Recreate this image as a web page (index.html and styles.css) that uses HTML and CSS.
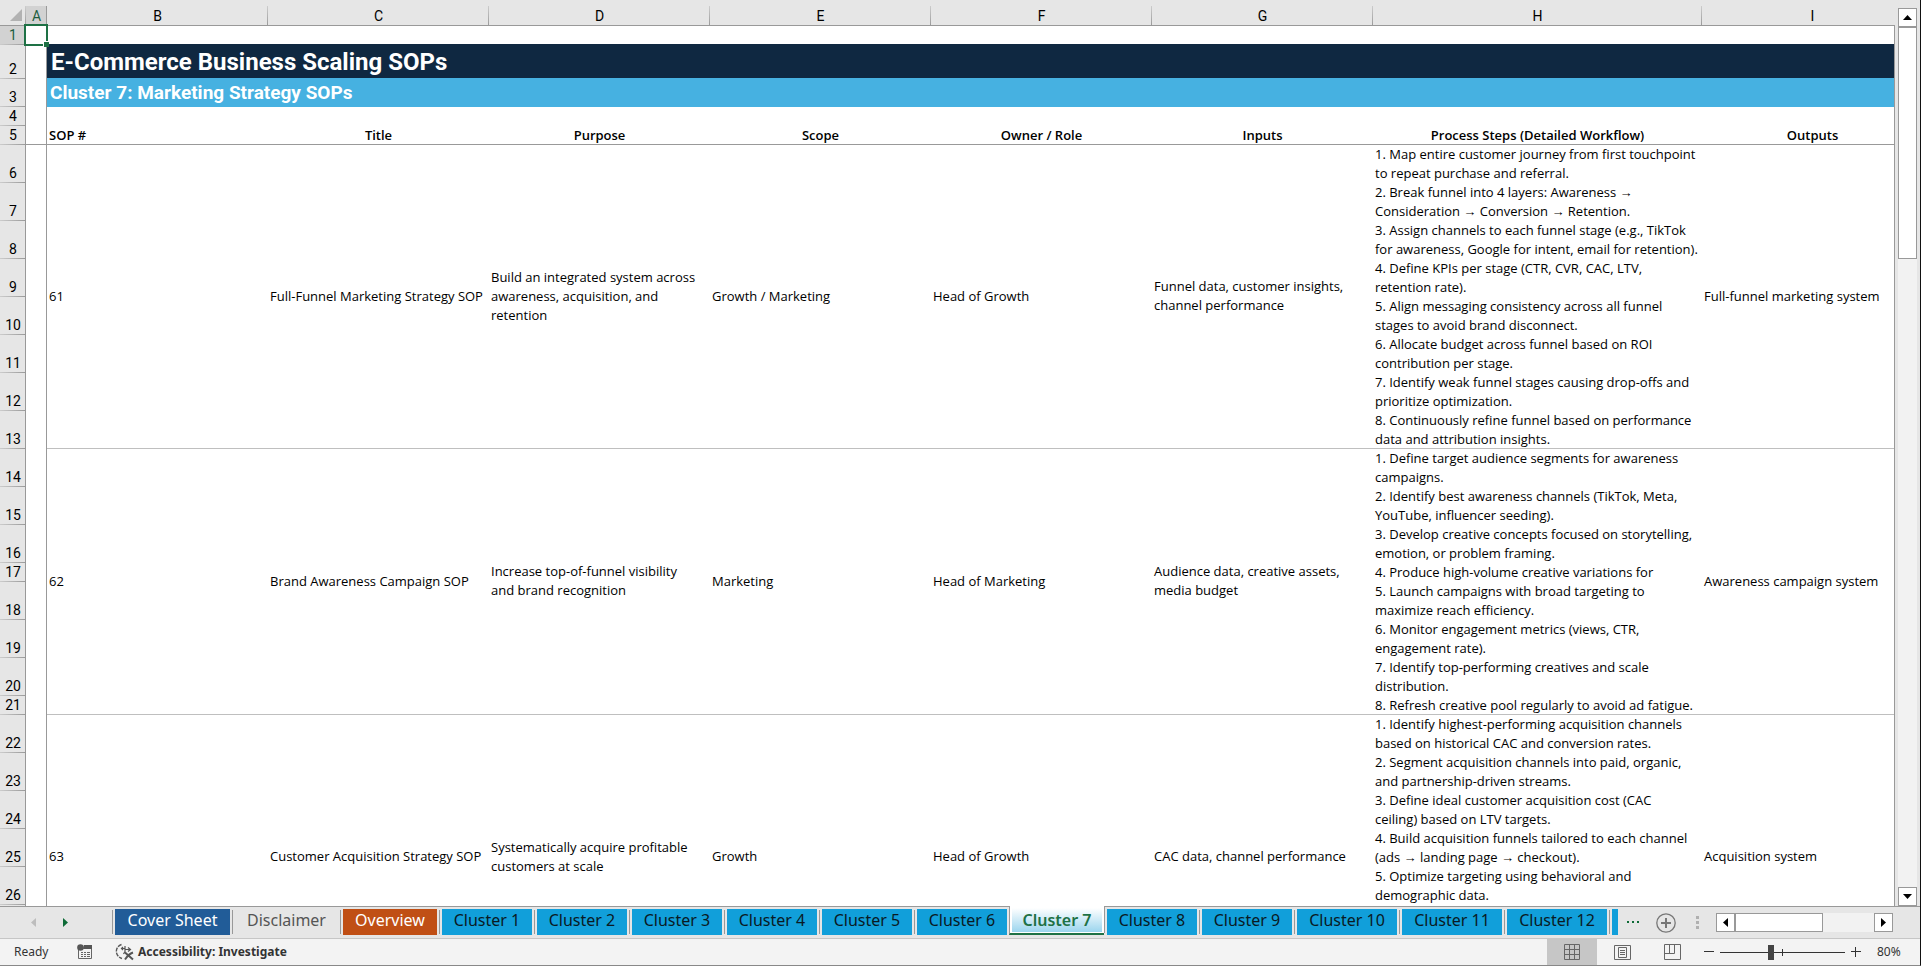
FILE: index.html
```html
<!DOCTYPE html>
<html lang="en">
<head>
<meta charset="utf-8">
<title>E-Commerce Business Scaling SOPs</title>
<link rel="stylesheet" href="styles.css">
</head>
<body>
<main class="workspace">
  <div class="viewport">
    <table class="sheet">
      <colgroup>
        <col class="col-head"><col class="col-a"><col class="col-std"><col class="col-std"><col class="col-std"><col class="col-std"><col class="col-std"><col class="col-std"><col class="col-steps"><col class="col-std">
      </colgroup>
      <thead>
        <tr>
          <th class="corner"><svg width="12" height="12" viewBox="0 0 12 12" aria-hidden="true"><path d="M12 0v12H0z" fill="#b2b2b2"/></svg></th>
          <th class="active">A</th><th>B</th><th>C</th><th>D</th><th>E</th><th>F</th><th>G</th><th>H</th><th>I</th>
        </tr>
      </thead>
      <tbody>
        <tr class="r-short"><th class="active">1</th><td class="a selected"></td><td colspan="8"></td></tr>
        <tr class="r-title"><th>2</th><td class="a"></td><td class="title" colspan="8">E-Commerce Business Scaling SOPs</td></tr>
        <tr class="r-subtitle"><th>3</th><td class="a"></td><td class="subtitle" colspan="8">Cluster 7: Marketing Strategy SOPs</td></tr>
        <tr class="r-short"><th>4</th><td class="a"></td><td colspan="8"></td></tr>
        <tr class="r-short labels"><th>5</th><td class="a"></td><td class="first">SOP #</td><td>Title</td><td>Purpose</td><td>Scope</td><td>Owner / Role</td><td>Inputs</td><td>Process Steps (Detailed Workflow)</td><td>Outputs</td></tr>

        <tr class="r-tall"><th>6</th><td class="a"></td>
          <td class="rec" rowspan="8">61</td>
          <td class="rec" rowspan="8">Full-Funnel Marketing Strategy SOP</td>
          <td class="rec" rowspan="8">Build an integrated system across<br>awareness, acquisition, and<br>retention</td>
          <td class="rec" rowspan="8">Growth / Marketing</td>
          <td class="rec" rowspan="8">Head of Growth</td>
          <td class="rec" rowspan="8">Funnel data, customer insights,<br>channel performance</td>
          <td class="rec steps" rowspan="8">1. Map entire customer journey from first touchpoint<br>to repeat purchase and referral.<br>2. Break funnel into 4 layers: Awareness →<br>Consideration → Conversion → Retention.<br>3. Assign channels to each funnel stage (e.g., TikTok<br>for awareness, Google for intent, email for retention).<br>4. Define KPIs per stage (CTR, CVR, CAC, LTV,<br>retention rate).<br>5. Align messaging consistency across all funnel<br>stages to avoid brand disconnect.<br>6. Allocate budget across funnel based on ROI<br>contribution per stage.<br>7. Identify weak funnel stages causing drop-offs and<br>prioritize optimization.<br>8. Continuously refine funnel based on performance<br>data and attribution insights.</td>
          <td class="rec" rowspan="8">Full-funnel marketing system</td></tr>
        <tr class="r-tall"><th>7</th><td class="a"></td></tr>
        <tr class="r-tall"><th>8</th><td class="a"></td></tr>
        <tr class="r-tall"><th>9</th><td class="a"></td></tr>
        <tr class="r-tall"><th>10</th><td class="a"></td></tr>
        <tr class="r-tall"><th>11</th><td class="a"></td></tr>
        <tr class="r-tall"><th>12</th><td class="a"></td></tr>
        <tr class="r-tall"><th>13</th><td class="a"></td></tr>

        <tr class="r-tall"><th>14</th><td class="a"></td>
          <td class="rec" rowspan="8">62</td>
          <td class="rec" rowspan="8">Brand Awareness Campaign SOP</td>
          <td class="rec" rowspan="8">Increase top-of-funnel visibility<br>and brand recognition</td>
          <td class="rec" rowspan="8">Marketing</td>
          <td class="rec" rowspan="8">Head of Marketing</td>
          <td class="rec" rowspan="8">Audience data, creative assets,<br>media budget</td>
          <td class="rec steps" rowspan="8">1. Define target audience segments for awareness<br>campaigns.<br>2. Identify best awareness channels (TikTok, Meta,<br>YouTube, influencer seeding).<br>3. Develop creative concepts focused on storytelling,<br>emotion, or problem framing.<br>4. Produce high-volume creative variations for<br>5. Launch campaigns with broad targeting to<br>maximize reach efficiency.<br>6. Monitor engagement metrics (views, CTR,<br>engagement rate).<br>7. Identify top-performing creatives and scale<br>distribution.<br>8. Refresh creative pool regularly to avoid ad fatigue.</td>
          <td class="rec" rowspan="8">Awareness campaign system</td></tr>
        <tr class="r-tall"><th>15</th><td class="a"></td></tr>
        <tr class="r-tall"><th>16</th><td class="a"></td></tr>
        <tr class="r-short"><th>17</th><td class="a"></td></tr>
        <tr class="r-tall"><th>18</th><td class="a"></td></tr>
        <tr class="r-tall"><th>19</th><td class="a"></td></tr>
        <tr class="r-tall"><th>20</th><td class="a"></td></tr>
        <tr class="r-short"><th>21</th><td class="a"></td></tr>

        <tr class="r-tall"><th>22</th><td class="a"></td>
          <td class="rec" rowspan="8">63</td>
          <td class="rec" rowspan="8">Customer Acquisition Strategy SOP</td>
          <td class="rec" rowspan="8">Systematically acquire profitable<br>customers at scale</td>
          <td class="rec" rowspan="8">Growth</td>
          <td class="rec" rowspan="8">Head of Growth</td>
          <td class="rec" rowspan="8">CAC data, channel performance</td>
          <td class="rec steps" rowspan="8">1. Identify highest-performing acquisition channels<br>based on historical CAC and conversion rates.<br>2. Segment acquisition channels into paid, organic,<br>and partnership-driven streams.<br>3. Define ideal customer acquisition cost (CAC<br>ceiling) based on LTV targets.<br>4. Build acquisition funnels tailored to each channel<br>(ads → landing page → checkout).<br>5. Optimize targeting using behavioral and<br>demographic data.</td>
          <td class="rec" rowspan="8">Acquisition system</td></tr>
        <tr class="r-tall"><th>23</th><td class="a"></td></tr>
        <tr class="r-tall"><th>24</th><td class="a"></td></tr>
        <tr class="r-tall"><th>25</th><td class="a"></td></tr>
        <tr class="r-tall"><th>26</th><td class="a"></td></tr>
        <tr class="r-tall"><th></th><td class="a"></td></tr>
        <tr class="r-tall"><th></th><td class="a"></td></tr>
        <tr class="r-short"><th></th><td class="a"></td></tr>
      </tbody>
    </table>
  </div>
  <div class="vscroll">
    <button class="scroll-btn" aria-label="Scroll up"><svg width="9" height="5" viewBox="0 0 9 5"><path d="M4.500 0L9 5H0z"/></svg></button>
    <div class="vtrack"><div class="vthumb"></div></div>
    <button class="scroll-btn" aria-label="Scroll down"><svg width="9" height="5" viewBox="0 0 9 5"><path d="M0 0h9L4.500 5z"/></svg></button>
  </div>
</main>

<nav class="tabbar" aria-label="Sheets">
  <div class="tab-nav">
    <button aria-label="Previous sheet"><svg width="5" height="9" viewBox="0 0 5 9"><path d="M5 0v9L0 4.500z" fill="#bdbdbd"/></svg></button>
    <button aria-label="Next sheet"><svg width="5" height="9" viewBox="0 0 5 9"><path d="M0 0v9l5-4.500z" fill="#0e6b37"/></svg></button>
  </div>
  <ul class="tabs">
    <li><button class="tab cover">Cover Sheet</button></li>
    <li><button class="tab plain">Disclaimer</button></li>
    <li><button class="tab overview">Overview</button></li>
    <li><button class="tab">Cluster 1</button></li>
    <li><button class="tab">Cluster 2</button></li>
    <li><button class="tab">Cluster 3</button></li>
    <li><button class="tab">Cluster 4</button></li>
    <li><button class="tab">Cluster 5</button></li>
    <li><button class="tab">Cluster 6</button></li>
    <li class="current"><button class="tab" aria-current="true">Cluster 7</button></li>
    <li class="after-current"><button class="tab">Cluster 8</button></li>
    <li><button class="tab">Cluster 9</button></li>
    <li><button class="tab wide">Cluster 10</button></li>
    <li><button class="tab wide">Cluster 11</button></li>
    <li><button class="tab wide">Cluster 12</button></li>
    <li><button class="tab sliver" aria-label="Next cluster"></button></li>
  </ul>
  <button class="more" aria-label="More sheets"><svg width="13" height="3" viewBox="0 0 13 3" fill="#0e6b37"><path d="M0 0h2v2H0zM5 0h2v2H5zM10 0h2v2h-2z"/></svg></button>
  <button class="add" aria-label="New sheet"><svg width="20" height="20" viewBox="0 0 20 20" fill="none" stroke="#777"><circle cx="10" cy="10" r="9.200" stroke-width="1.300"/><path d="M10 5v10M5 10h10" stroke-width="2"/></svg></button>
  <svg class="grip" width="3" height="13" viewBox="0 0 3 13" fill="#b0b0b0" aria-hidden="true"><path d="M0 0h3v3H0zM0 5h3v3H0zM0 10h3v3H0z"/></svg>
  <div class="hscroll">
    <button class="scroll-btn" aria-label="Scroll left"><svg width="5" height="9" viewBox="0 0 5 9"><path d="M5 0v9L0 4.500z"/></svg></button>
    <div class="htrack"><div class="hthumb"></div></div>
    <button class="scroll-btn" aria-label="Scroll right"><svg width="5" height="9" viewBox="0 0 5 9"><path d="M0 0v9l5-4.500z"/></svg></button>
  </div>
</nav>

<footer class="status">
  <span class="ready">Ready</span>
  <button class="macro" aria-label="Record macro"><svg width="16" height="16" viewBox="0 0 16 16"><path d="M1.500 6v8.500h13V4" fill="none" stroke="#666"/><path d="M7 1h8v4H6z" fill="#555"/><circle cx="3.500" cy="3.500" r="3.300" fill="#555"/><path d="M4 8.500h2M7 8.500h2M10 8.500h3M4 10.500h2M7 10.500h2M10 10.500h3M4 12.500h2M7 12.500h2M10 12.500h3" stroke="#666"/></svg></button>
  <button class="access"><svg width="20" height="18" viewBox="0 0 20 18" fill="none" stroke="#555"><path d="M6.500 1.500C-.5 4-.5 13 7 15.500" stroke-width="1.400" stroke-dasharray="4 1.200"/><path d="M6 5.500h4M10 3v6M10 6.500h5M13 4.500l2.500 2-2.500 2M8 4l-1.500 1.500L8 7M10 8.500L8.500 11" stroke-width="1.200"/><path d="M10 9.500l8 7M18 9.500c-3 1-6 4-8 7" stroke-width="2"/></svg><span>Accessibility: Investigate</span></button>
  <div class="views">
    <button class="view on" aria-label="Normal view"><svg width="16" height="16" viewBox="0 0 16 16" fill="none" stroke="#666"><path d="M.5.5h15v15H.5zM5.500.5v15M10.500.5v15M.5 5.500h15M.5 10.500h15"/></svg></button>
    <button class="view" aria-label="Page layout"><svg width="17" height="15" viewBox="0 0 17 15" fill="none" stroke="#666"><path d="M.5.5h16v14H.5zM4.500 2.500h8v10h-8zM6 5.500h5M6 7.500h5M6 9.500h5"/></svg></button>
    <button class="view" aria-label="Page break preview"><svg width="17" height="16" viewBox="0 0 17 16" fill="none" stroke="#666"><path d="M.5.5h16v15H.5zM.5 9.500h10v-9M5.500.5v9"/></svg></button>
  </div>
  <div class="zoom">
    <button aria-label="Zoom out"><svg width="10" height="10" viewBox="0 0 10 10" stroke="#333"><path d="M0 4.500h10"/></svg></button>
    <div class="slider"><input type="range" min="0" max="100" value="40" aria-label="Zoom"></div>
    <button aria-label="Zoom in"><svg width="10" height="10" viewBox="0 0 10 10" stroke="#333"><path d="M0 4.500h10M4.500 0v10"/></svg></button>
  </div>
  <span class="percent">80%</span>
</footer>
</body>
</html>
```
FILE: styles.css
```css
* { box-sizing: border-box; }

body {
  margin: 0;
  height: 100vh;
  display: flex;
  flex-direction: column;
  overflow: hidden;
  background: #e6e6e6;
  border-right: 1px solid #111;
  border-bottom: 1px solid #888;
  color: #000;
  font: 13px/19px "Open Sans", "Noto Sans", sans-serif;
}

button {
  margin: 0;
  padding: 0;
  border: 0;
  background: none;
  color: inherit;
  font: inherit;
  display: flex;
  align-items: center;
  justify-content: center;
}

svg { display: block; }

/* Grid */
.workspace {
  flex: 1;
  min-height: 0;
  display: flex;
  border-bottom: 1px solid #999;
}

.viewport {
  flex: 1;
  min-width: 0;
  overflow: hidden;
  position: relative;
}

.viewport::after {
  content: "";
  position: absolute;
  top: 25px;
  right: 0;
  bottom: 0;
  width: 1px;
  background: #999;
}

.sheet {
  table-layout: fixed;
  width: 1923px;
  border-collapse: separate;
  border-spacing: 0;
  background: #fff;
}

.col-head { width: 26px; }
.col-a { width: 21px; }
.col-std { width: 221px; }
.col-steps { width: 329px; }

.sheet th, .sheet td {
  padding: 0 2px;
  white-space: nowrap;
}

.sheet th {
  padding: 0;
  font-family: Roboto, "Liberation Sans", sans-serif;
  font-size: 14px;
  font-weight: 400;
}

.sheet thead th {
  height: 26px;
  padding-top: 6px;
  line-height: 18px;
  background:
    linear-gradient(#999, #999) left bottom / 100% 1px no-repeat,
    linear-gradient(#ccc, #999) right 6px / 1px 20px no-repeat,
    #e6e6e6;
}

.sheet thead th.active {
  color: #1e5e3f;
  background:
    linear-gradient(#999, #999) left bottom / 100% 1px no-repeat,
    linear-gradient(#999, #999) right 6px / 1px 20px no-repeat,
    linear-gradient(#d2d2d2, #d2d2d2) left 6px / 100% 20px no-repeat,
    #e6e6e6;
}

.sheet thead th.corner { padding: 3px 0 0 10px; }

.sheet tbody th {
  vertical-align: bottom;
  background:
    linear-gradient(#999, #999) right top / 1px 100% no-repeat,
    linear-gradient(90deg, #ccc, #999) left bottom / 100% 1px no-repeat,
    #e6e6e6;
}

.sheet tbody th.active {
  color: #1e5e3f;
  background-color: #d2d2d2;
}

.r-short { height: 19px; }
.r-title { height: 34px; }
.r-subtitle { height: 28px; }
.r-tall { height: 38px; }

.a { box-shadow: inset -1px 0 #999; }

.selected { position: relative; }

.selected::before {
  content: "";
  position: absolute;
  inset: -2px -1px -1px -2px;
  border: 2px solid #1e7145;
}

.selected::after {
  content: "";
  position: absolute;
  right: -2px;
  bottom: -2px;
  width: 5px;
  height: 5px;
  background: #1e7145;
  border-left: 1px solid #fff;
  border-top: 1px solid #fff;
}

.sheet .title {
  padding-left: 4px;
  background: #0f2841;
  box-shadow: 0 -1px #0f2841;
  color: #fff;
  font-family: Roboto, "Liberation Sans", sans-serif;
  font-size: 24px;
  font-weight: 700;
  line-height: 32px;
}

.sheet .subtitle {
  padding-left: 3px;
  background: #46b1e1;
  box-shadow: 0 -1px #46b1e1;
  color: #fff;
  font-family: Roboto, "Liberation Sans", sans-serif;
  font-size: 19px;
  font-weight: 700;
  line-height: 26px;
}

.labels td {
  text-align: center;
  font-weight: 600;
  box-shadow: inset 0 -1px #999;
}

.labels td.first { text-align: left; }
.labels td.a { box-shadow: inset -1px -1px #999; }

.sheet .rec {
  padding-bottom: 2px;
  vertical-align: middle;
  box-shadow: inset 0 -1px #bfbfbf;
}

.sheet .steps {
  padding-bottom: 0;
  vertical-align: top;
}

/* Scroll bars */
.scroll-btn {
  flex: none;
  width: 19px;
  height: 19px;
  border: 1px solid #999;
  background: #fff;
}

.vscroll {
  display: flex;
  flex-direction: column;
  padding: 8px 3px 0;
}

.vtrack {
  flex: 1;
  background: #f2f2f2;
}

.vthumb {
  height: 27%;
  border: 1px solid #999;
  background: #fff;
}

.hscroll {
  flex: none;
  display: flex;
  width: 177px;
  margin: 0 27px 0 17px;
}

.htrack {
  flex: 1;
  background: #f2f2f2;
}

.hthumb {
  width: 63%;
  height: 19px;
  border: 1px solid #999;
  background: #fff;
}

/* Sheet tabs */
.tabbar {
  height: 32px;
  display: flex;
  align-items: center;
  border-bottom: 1px solid #c6c6c6;
}

.tab-nav {
  flex: none;
  display: flex;
  width: 112px;
  padding-left: 17px;
}

.tab-nav button {
  width: 32px;
  height: 24px;
}

.tabs {
  flex: 1;
  align-self: stretch;
  display: flex;
  margin: 0;
  padding: 0;
  list-style: none;
}

.tabs li {
  padding: 2px 2px 0;
  border-left: 1px solid transparent;
  background: linear-gradient(#999, #999) left 3px / 1px 24px no-repeat border-box;
}

.tab {
  width: 90px;
  height: 26px;
  padding-bottom: 4px;
  background: #119fda;
  color: #0a1a24;
  font: 16px/22px "Noto Sans", "Open Sans", sans-serif;
}

.tab.cover { width: 115px; background: #215c98; color: #fff; }
.tab.plain { width: 103px; background: none; color: #555; }
.tab.overview { width: 94px; background: #c04f15; color: #fff; }
.tab.wide { width: 100px; }
.tab.sliver { width: 6px; }

.tabs li.current {
  height: 29px;
  margin-top: -1px;
  border-left-color: #999;
  border-bottom: 2px solid #1e7145;
  background: #fff;
}

.tabs li.after-current {
  background: linear-gradient(#999, #999) left top / 1px 26px no-repeat border-box;
}

.current .tab {
  height: 24px;
  padding-bottom: 1px;
  background: linear-gradient(#fff, #9bd5ee);
  color: #1e7145;
  font-weight: 600;
}

.more { margin-left: 7px; }
.add { margin-left: 16px; }
.grip { margin-left: 20px; }

/* Status bar */
.status {
  height: 26px;
  display: flex;
  align-items: center;
  background: #f3f3f3;
  color: #333;
  font: 12px/18px "Noto Sans", "Open Sans", sans-serif;
}

.ready {
  width: 77px;
  padding-left: 14px;
}

.access {
  margin-left: 22px;
  gap: 3px;
  font-weight: 700;
}

.views {
  align-self: stretch;
  display: flex;
  margin-left: auto;
}

.view { width: 50px; }
.view.on { background: #c6c6c6; }

.zoom {
  display: flex;
  align-items: center;
  gap: 6px;
  margin-left: 7px;
}

.slider {
  display: flex;
  width: 125px;
  background:
    linear-gradient(#333, #333) center / 1px 7px no-repeat,
    linear-gradient(#333, #333) center / 100% 1px no-repeat;
}

.slider input {
  appearance: none;
  width: 100%;
  height: 15px;
  margin: 0;
  background: none;
}

.slider input::-webkit-slider-thumb {
  appearance: none;
  width: 6px;
  height: 15px;
  background: #444;
}

.percent {
  width: 59px;
  padding-left: 16px;
}
```
